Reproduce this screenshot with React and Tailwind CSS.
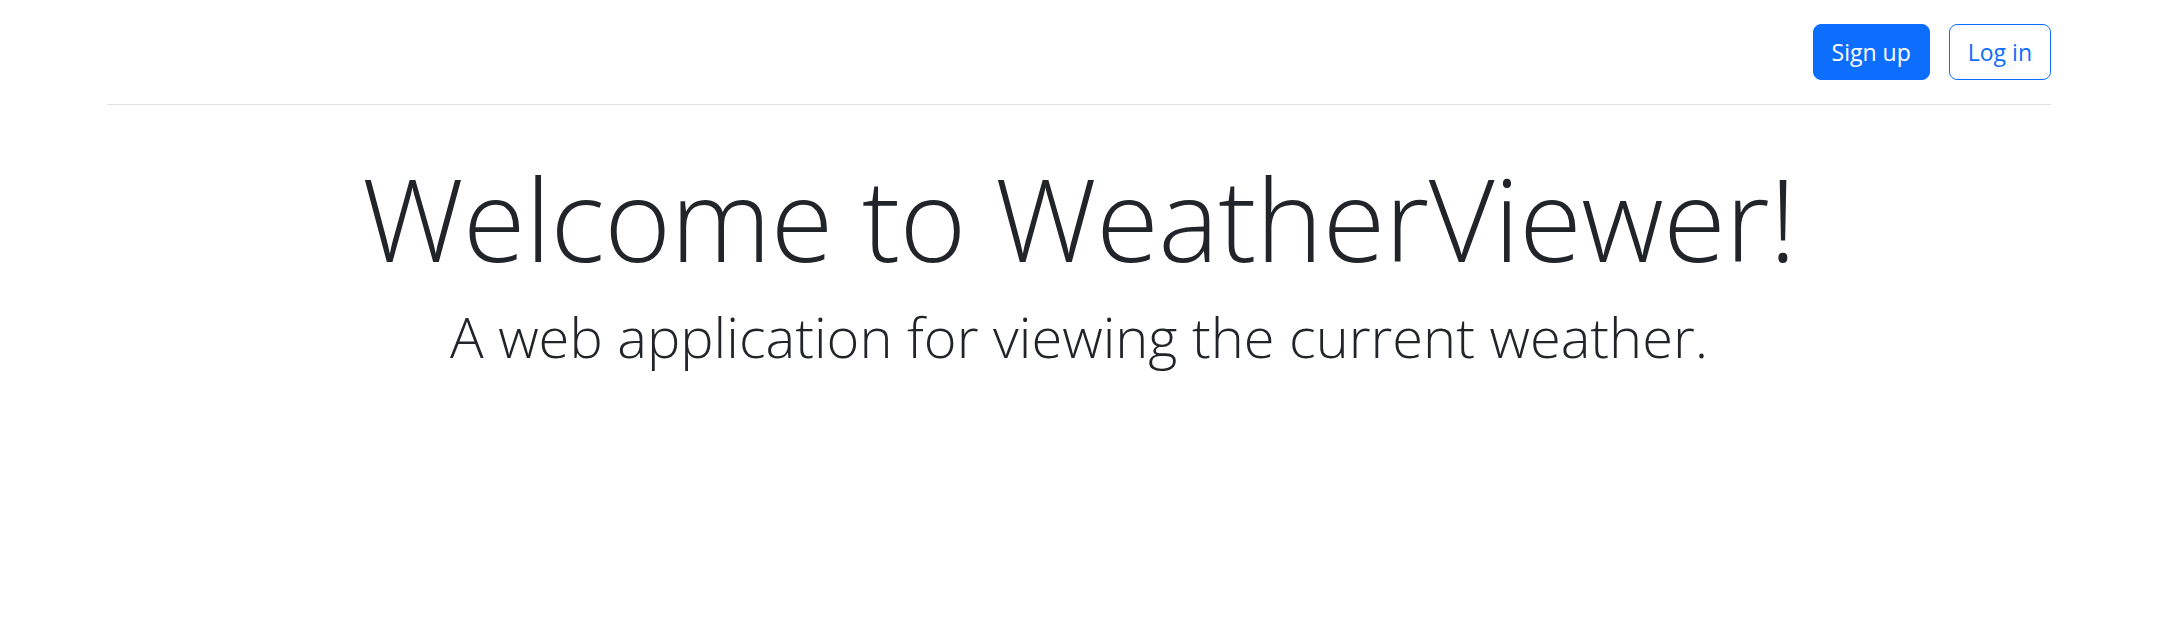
import React from 'react';

const App = () => {
  return (
    <div className="min-h-[624px] bg-white text-[#212529]" style={{ fontFamily: '"Open Sans", "Noto Sans", sans-serif' }}>
      <div className="mx-auto w-[1980px] px-[18px]">
        <header className="flex justify-end items-center gap-[19px] py-6 mb-9 border-b border-[#dee2e6]">
          <button className="h-[56px] px-[18px] rounded-[8px] bg-[#0d6efd] border border-[#0d6efd] text-white text-[23px] leading-[36px]">
            Sign up
          </button>
          <button className="h-[56px] px-[18px] rounded-[8px] bg-white border border-[#0d6efd] text-[#0d6efd] text-[23px] leading-[36px]">
            Log in
          </button>
        </header>

        <main className="text-center pt-[5px]">
          <h1 className="text-[114px] leading-[144px] font-light tracking-[-0.5px] mb-[10px]">Welcome to WeatherViewer!</h1>
          <p className="text-[56px] leading-[72px] font-light">A web application for viewing the current weather.</p>
        </main>
      </div>
    </div>
  );
};

export default App;
